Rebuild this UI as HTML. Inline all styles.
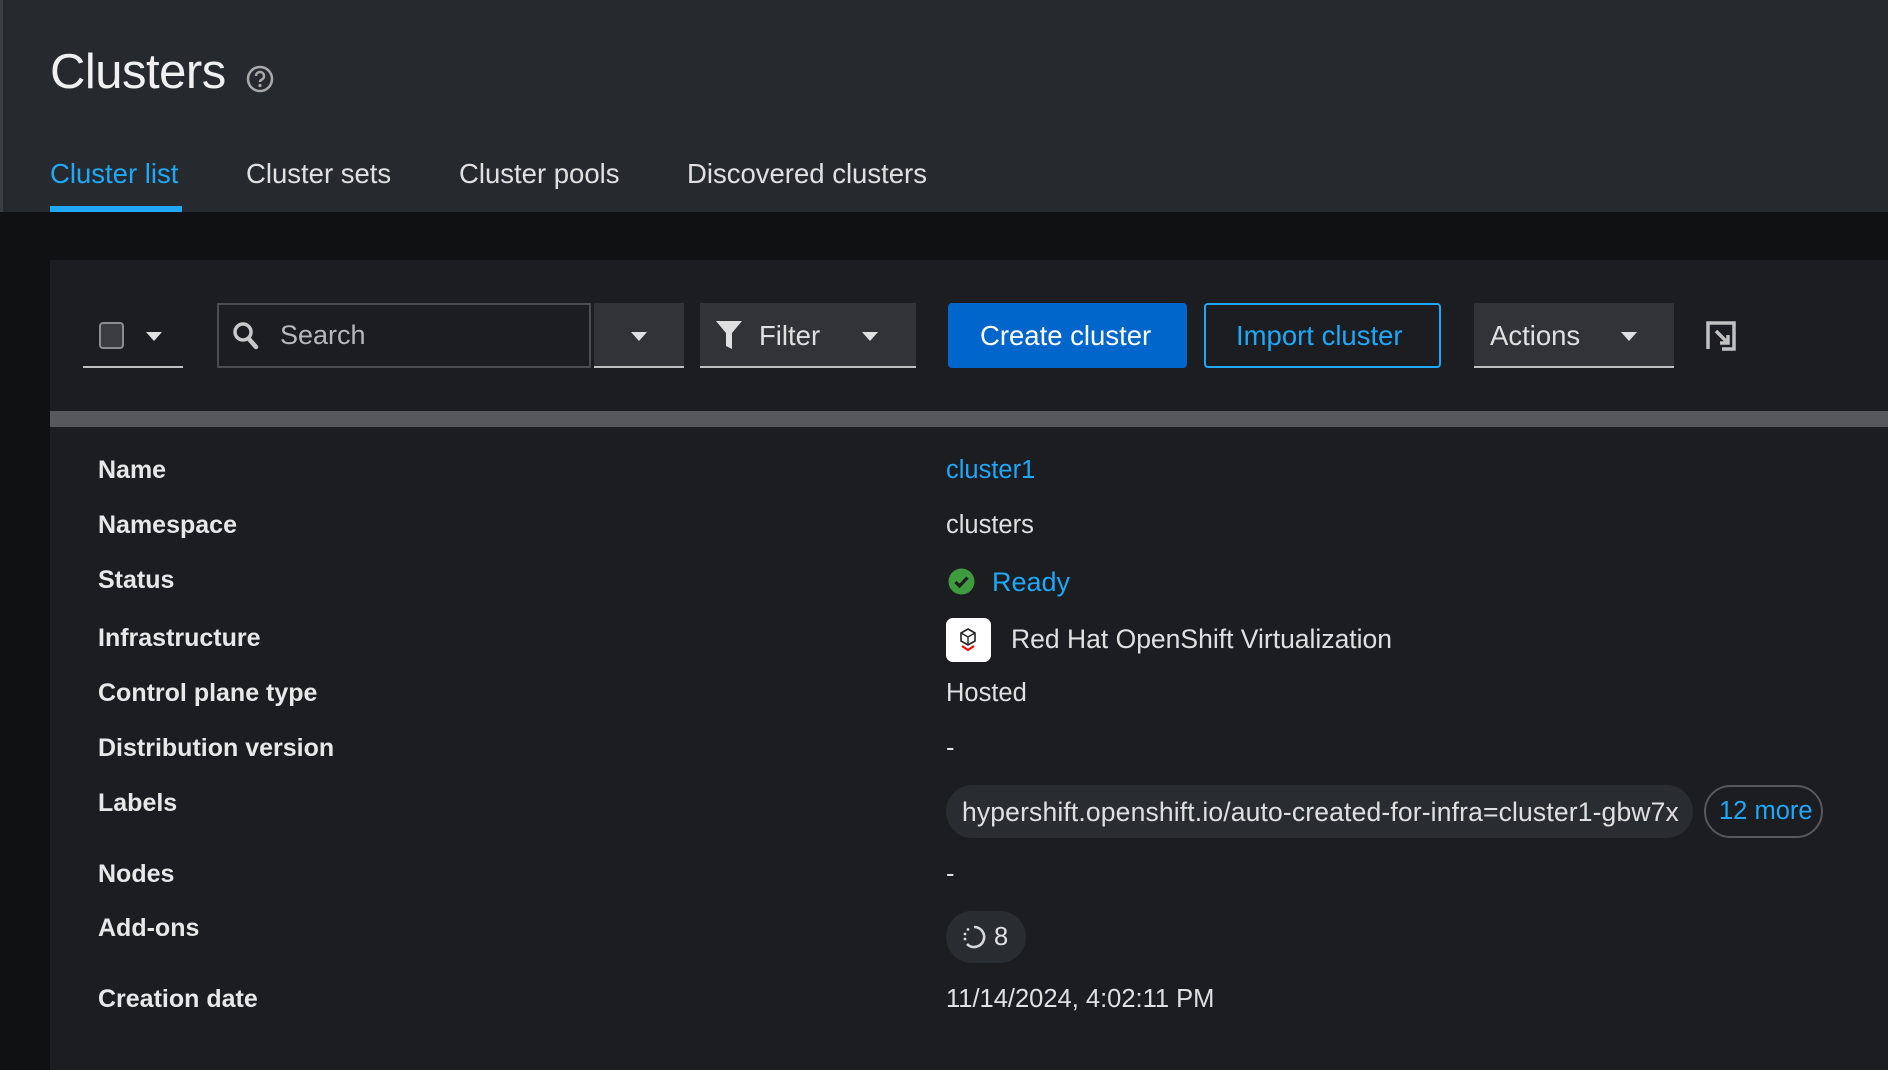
<!DOCTYPE html>
<html><head><meta charset="utf-8"><style>
*{margin:0;padding:0;box-sizing:border-box}
body{width:1888px;height:1070px;overflow:hidden;background:#0f1113;font-family:"Liberation Sans",sans-serif;color:#e0e0e0;position:relative}
.a{position:absolute;white-space:nowrap}
.hdr{left:0;top:0;width:1888px;height:212px;background:#26292e;border-left:3px solid #3a3d41}
.title{left:50px;top:44px;font-size:49px;color:#f0f0f0;letter-spacing:-0.5px}
.tab{top:158px;font-size:27.5px;color:#e0e0e0}
.panel{left:50px;top:260px;width:1838px;height:810px;background:#1b1d21}
.lbl{left:98px;font-size:25px;font-weight:bold;color:#e8e8e8}
.val{left:946px;font-size:25.5px;color:#e0e0e0}
.ctl{top:303px;height:65px}
.tri{width:0;height:0;border-left:8px solid transparent;border-right:8px solid transparent;border-top:9px solid #e0e0e0;position:absolute}
</style></head><body>
<div class="a hdr"></div>
<div class="a title">Clusters</div>
<svg class="a" style="left:246px;top:65px" width="28" height="28" viewBox="0 0 28 28"><circle cx="14" cy="14" r="12" fill="none" stroke="#aaa" stroke-width="2.5"/><path d="M10 11a4 4 0 1 1 5.5 3.7c-1 .5-1.5 1.2-1.5 2.3" fill="none" stroke="#aaa" stroke-width="2.5"/><circle cx="14" cy="20.5" r="1.6" fill="#aaa"/></svg>
<div class="a tab" style="left:50px;color:#1fa7f8">Cluster list</div>
<div class="a" style="left:50px;top:206px;width:132px;height:6px;background:#1fa7f8"></div>
<div class="a tab" style="left:246px">Cluster sets</div>
<div class="a tab" style="left:459px">Cluster pools</div>
<div class="a tab" style="left:687px">Discovered clusters</div>

<div class="a panel"></div>
<div class="a ctl" style="left:83px;width:100px;border-bottom:2px solid #c0c0c0"></div>
<div class="a" style="left:99px;top:322px;width:25px;height:27px;border:2px solid #8a8d90;border-radius:4px;background:#3a3c40"></div>
<div class="tri" style="left:146px;top:332px"></div>
<div class="a ctl" style="left:217px;width:374px;border:2px solid #4a4c50;background:#1b1d21"></div>
<svg class="a" style="left:232px;top:321px" width="28" height="30" viewBox="0 0 28 30"><circle cx="11" cy="11" r="8" fill="none" stroke="#c8c8c8" stroke-width="3.5"/><path d="M17 18l7 8" stroke="#c8c8c8" stroke-width="4.5" stroke-linecap="round"/></svg>
<div class="a" style="left:280px;top:320px;font-size:27px;color:#b8b8b8">Search</div>
<div class="a ctl" style="left:594px;width:90px;background:#313337;border-bottom:2px solid #c0c0c0"></div>
<div class="tri" style="left:631px;top:332px"></div>
<div class="a ctl" style="left:700px;width:216px;background:#313337;border-bottom:2px solid #c0c0c0"></div>
<svg class="a" style="left:715px;top:320px" width="28" height="30" viewBox="0 0 28 30"><path d="M1 1h26l-10 12v16l-6-3V13z" fill="#e0e0e0"/></svg>
<div class="a" style="left:759px;top:320px;font-size:27.5px">Filter</div>
<div class="tri" style="left:862px;top:332px"></div>
<div class="a ctl" style="left:948px;width:239px;background:#0066cc;border-radius:4px"></div>
<div class="a" style="left:980px;top:320px;font-size:27.5px;color:#fff">Create cluster</div>
<div class="a ctl" style="left:1204px;width:237px;border:2px solid #1fa7f8;border-radius:4px"></div>
<div class="a" style="left:1236px;top:320px;font-size:27.5px;color:#1fa7f8">Import cluster</div>
<div class="a ctl" style="left:1474px;width:200px;background:#313337;border-bottom:2px solid #c0c0c0"></div>
<div class="a" style="left:1490px;top:320px;font-size:27.5px">Actions</div>
<div class="tri" style="left:1621px;top:332px"></div>
<svg class="a" style="left:1706px;top:321px" width="30" height="30" viewBox="0 0 30 30"><path d="M2 28V2h26v26H16" fill="none" stroke="#c0c0c0" stroke-width="3.5"/><path d="M10 10l12 12M14 22h8v-8" fill="none" stroke="#c0c0c0" stroke-width="3.5"/></svg>
<div class="a" style="left:50px;top:411px;width:1838px;height:16px;background:#57585b"></div>

<div class="a lbl" style="top:456px">Name</div>
<div class="a val" style="top:456px;color:#1fa7f8">cluster1</div>
<div class="a lbl" style="top:511px">Namespace</div>
<div class="a val" style="top:511px">clusters</div>
<div class="a lbl" style="top:566px">Status</div>
<svg class="a" style="left:948px;top:568px" width="27" height="27" viewBox="0 0 27 27"><circle cx="13.5" cy="13.5" r="13" fill="#3e9c3e"/><path d="M7.5 14l4 4 8-8.5" fill="none" stroke="#1b1d21" stroke-width="3.2"/></svg>
<div class="a val" style="left:992px;top:567px;font-size:27px;color:#1fa7f8">Ready</div>
<div class="a lbl" style="top:624px">Infrastructure</div>
<div class="a" style="left:946px;top:618px;width:45px;height:44px;background:#fff;border-radius:7px"></div>
<svg class="a" style="left:956px;top:627px" width="24" height="26" viewBox="0 0 24 26"><path d="M12 2l7 4v8l-7 4-7-4V6z" fill="none" stroke="#222" stroke-width="1.6"/><path d="M5 6l7 4 7-4M12 10v8" fill="none" stroke="#222" stroke-width="1.4"/><path d="M6 19l6 4 6-4" fill="none" stroke="#e00" stroke-width="2"/></svg>
<div class="a val" style="left:1011px;top:624px;font-size:26.5px">Red Hat OpenShift Virtualization</div>
<div class="a lbl" style="top:679px">Control plane type</div>
<div class="a val" style="top:679px">Hosted</div>
<div class="a lbl" style="top:734px">Distribution version</div>
<div class="a val" style="top:734px">-</div>
<div class="a lbl" style="top:789px">Labels</div>
<div class="a" style="left:946px;top:785px;width:747px;height:53px;background:#292c31;border-radius:27px"></div>
<div class="a val" style="left:962px;top:797px;font-size:26.5px;letter-spacing:0.15px">hypershift.openshift.io/auto-created-for-infra=cluster1-gbw7x</div>
<div class="a" style="left:1704px;top:785px;width:119px;height:53px;border:2px solid #55585c;border-radius:27px"></div>
<div class="a val" style="left:1719px;top:797px;color:#1fa7f8">12 more</div>
<div class="a lbl" style="top:860px">Nodes</div>
<div class="a val" style="top:860px">-</div>
<div class="a lbl" style="top:914px">Add-ons</div>
<div class="a" style="left:946px;top:911px;width:80px;height:52px;background:#292c31;border-radius:26px"></div>
<svg class="a" style="left:961px;top:924px" width="26" height="26" viewBox="0 0 26 26"><path d="M13 3a10 10 0 1 1-7 17" fill="none" stroke="#d8d8d8" stroke-width="2.6"/><circle cx="4" cy="15" r="1.4" fill="#d8d8d8"/><circle cx="4" cy="10" r="1.4" fill="#d8d8d8"/><circle cx="7" cy="5.5" r="1.4" fill="#d8d8d8"/></svg>
<div class="a val" style="left:994px;top:923px">8</div>
<div class="a lbl" style="top:985px">Creation date</div>
<div class="a val" style="top:985px">11/14/2024, 4:02:11 PM</div>
</body></html>
